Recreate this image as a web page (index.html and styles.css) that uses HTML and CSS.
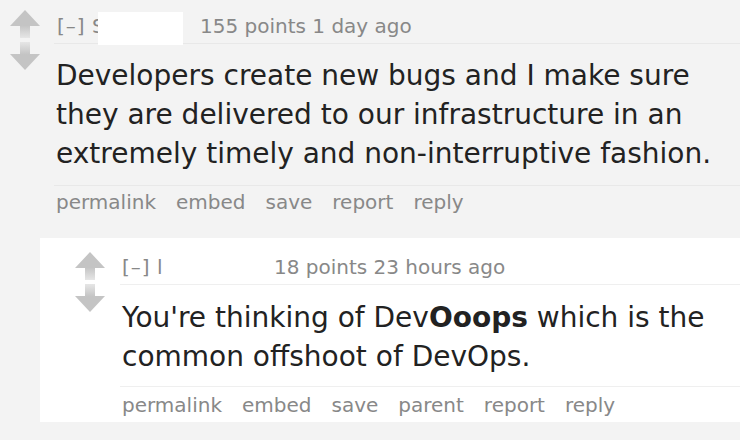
FILE: index.html
```html
<!DOCTYPE html>
<html>
<head>
<meta charset="utf-8">
<link rel="stylesheet" href="styles.css">
</head>
<body>
<div class="comment top">
  <div class="votes">
    <svg class="arrow" viewBox="0 0 30 28" width="30" height="28"><defs><linearGradient id="gu" x1="0" y1="0" x2="0" y2="1"><stop offset="0" stop-color="#c4c4c4"/><stop offset="0.55" stop-color="#c4c4c4"/><stop offset="1" stop-color="#e6e6e6"/></linearGradient></defs><polygon points="15,0 30,16 20,16 20,28 10,28 10,16 0,16" fill="url(#gu)"/></svg>
    <svg class="arrow down" viewBox="0 0 30 28" width="30" height="28"><defs><linearGradient id="gd" x1="0" y1="1" x2="0" y2="0"><stop offset="0" stop-color="#c4c4c4"/><stop offset="0.55" stop-color="#c4c4c4"/><stop offset="1" stop-color="#e6e6e6"/></linearGradient></defs><polygon points="15,28 30,12 20,12 20,0 10,0 10,12 0,12" fill="url(#gd)"/></svg>
  </div>
  <div class="entry">
    <div class="tagline"><span class="expand">[–]</span> <span class="author w1">S</span><span class="score">155 points</span> 1 day ago<span class="redact"></span></div>
    <div class="md">Developers create new bugs and I make sure they are delivered to our infrastructure in an extremely timely and non-interruptive fashion.</div>
    <ul class="buttons"><li>permalink</li><li>embed</li><li>save</li><li>report</li><li>reply</li></ul>
  </div>
</div>
<div class="comment child">
  <div class="votes">
    <svg class="arrow" viewBox="0 0 30 28" width="30" height="28"><polygon points="15,0 30,16 20,16 20,28 10,28 10,16 0,16" fill="url(#gu)"/></svg>
    <svg class="arrow down" viewBox="0 0 30 28" width="30" height="28"><polygon points="15,28 30,12 20,12 20,0 10,0 10,12 0,12" fill="url(#gd)"/></svg>
  </div>
  <div class="entry">
    <div class="tagline"><span class="expand">[–]</span> <span class="author w2">l</span><span class="score">18 points</span> 23 hours ago</div>
    <div class="md">You're thinking of Dev<b>Ooops</b> which is the common offshoot of DevOps.</div>
    <ul class="buttons"><li>permalink</li><li>embed</li><li>save</li><li>parent</li><li>report</li><li>reply</li></ul>
  </div>
</div>
</body>
</html>
```
FILE: styles.css
```css
html, body {
  margin: 0;
  padding: 0;
  background: #f3f3f3;
  font-family: "DejaVu Sans", Verdana, sans-serif;
}
.comment {
  display: flex;
  align-items: flex-start;
}
.comment.top {
  padding: 10px 0 0 10px;
}
.comment.child {
  margin: 24px 0 0 40px;
  background: #fff;
  padding: 14px 0 5px 35px;
}
.votes {
  display: flex;
  flex-direction: column;
  gap: 4px;
  width: 30px;
  margin-right: 14px;
  flex: none;
}
.child .votes {
  width: 31px;
  margin-right: 14px;
}
.arrow {
  display: block;
}
.entry {
  flex: 1;
  min-width: 0;
}
.tagline {
  position: relative;
  font-size: 20px;
  line-height: 24px;
  color: #888;
  padding: 4px 0 5px 3px;
  border-bottom: 1px solid #e8e8e8;
  white-space: nowrap;
}
.child .tagline {
  padding: 3px 0 5px 2px;
  border-bottom: 1px solid #efefef;
}
.expand {
  color: #888;
  letter-spacing: 1px;
}
.author {
  display: inline-block;
  color: #888;
  vertical-align: top;
}
.w1 { width: 108px; }
.w2 { width: 117px; }
.score {
  color: #888;
}
.redact {
  position: absolute;
  left: 44px;
  top: 2px;
  width: 85px;
  height: 33px;
  background: #fff;
}
.md {
  font-size: 28px;
  line-height: 39px;
  color: #222;
  padding: 12px 20px 12px 2px;
  border-bottom: 1px solid #e8e8e8;
}
.child .md {
  padding: 13px 20px 10px 2px;
  border-bottom: 1px solid #efefef;
}
.md b {
  font-weight: bold;
}
.buttons {
  list-style: none;
  margin: 0;
  padding: 4px 0 0 2px;
  display: flex;
  gap: 20px;
  font-size: 20px;
  line-height: 24px;
  color: #888;
}
.child .buttons {
  padding-top: 6px;
}
```
